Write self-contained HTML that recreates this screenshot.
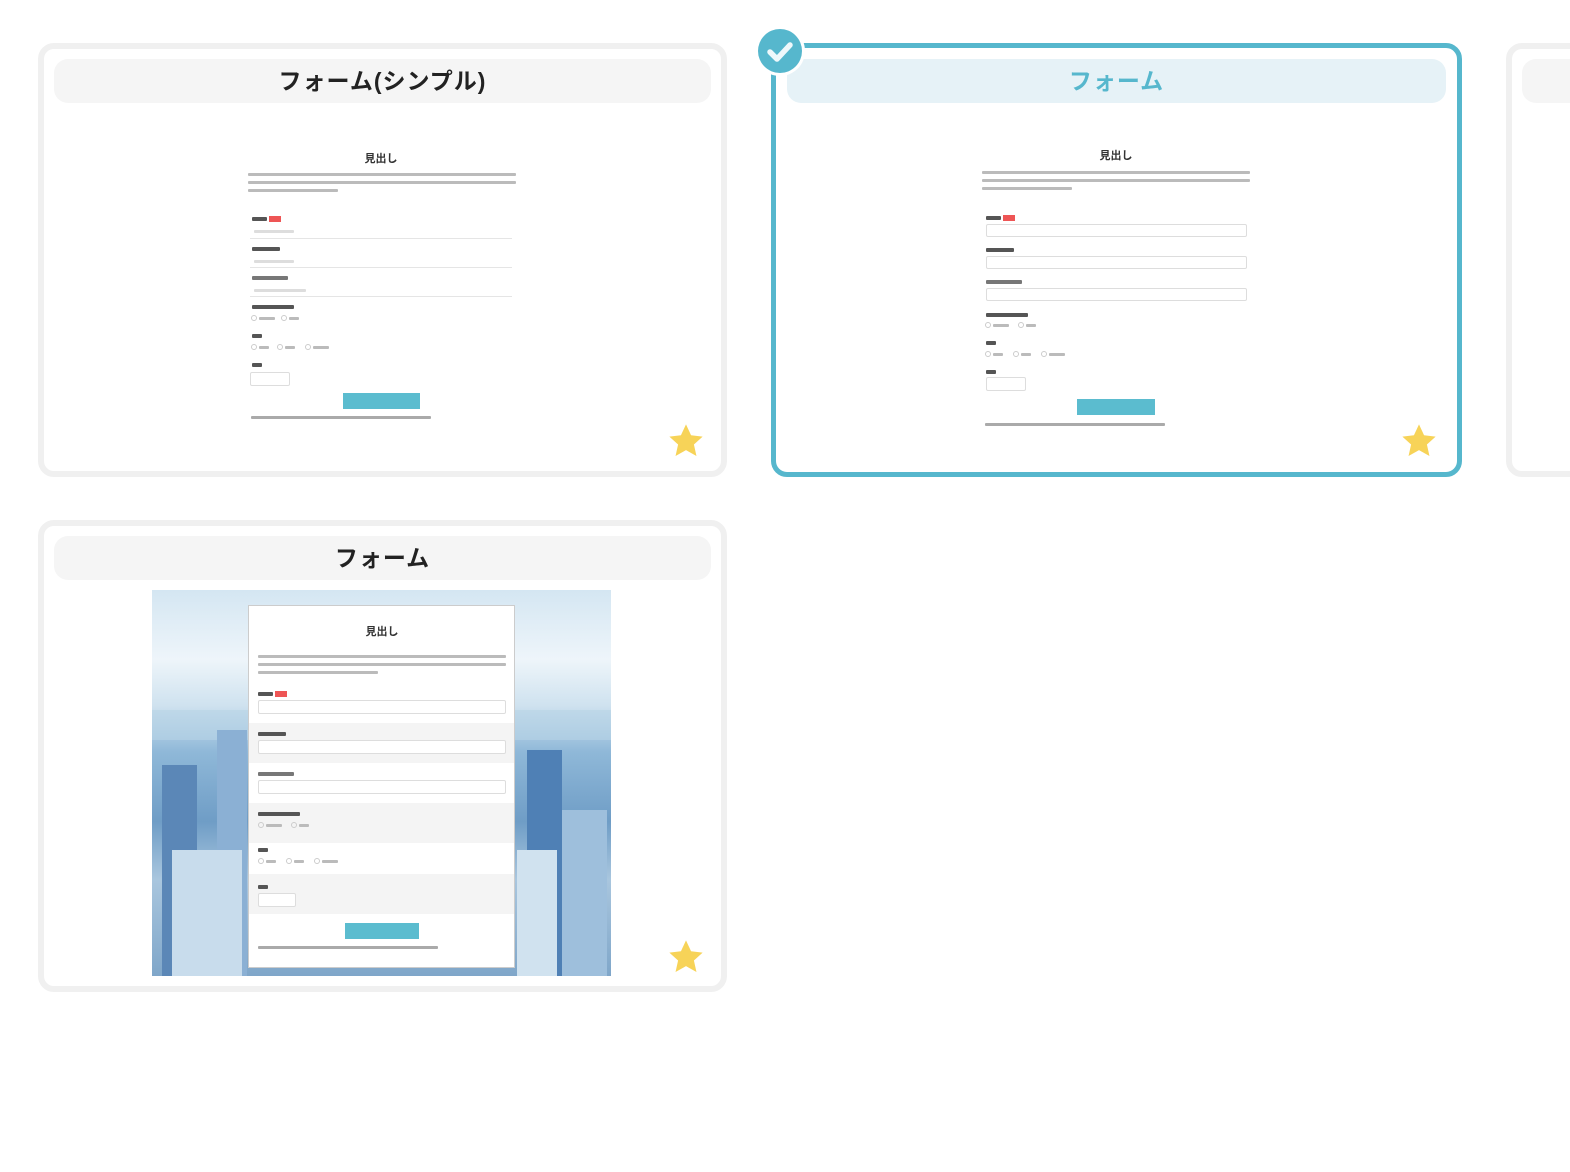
<!DOCTYPE html>
<html><head><meta charset="utf-8"><style>
*{margin:0;padding:0;box-sizing:border-box}
body{width:1570px;height:1172px;background:#fff;position:relative;overflow:hidden;font-family:"Liberation Sans","Noto Sans CJK JP",sans-serif}
.a{position:absolute}
.card{position:absolute;border:6px solid #f0f0f0;border-radius:16px;background:#fff}
.sel{border:5px solid #56b7cd}
.tb{position:absolute;height:44px;border-radius:14px;background:#f5f5f5;font-size:23px;font-weight:bold;color:#222;text-align:center;line-height:44px;letter-spacing:1px}
.b{position:absolute;height:3px;background:#bbb;border-radius:1px}
.l{position:absolute;height:4px;background:#555;border-radius:1px}
.h{position:absolute;font-size:11px;font-weight:bold;color:#333;width:100px;text-align:center;margin-left:-50px}
.rd{position:absolute;width:6px;height:6px;border:1px solid #ccc;border-radius:50%}
.inp{position:absolute;border:1px solid #ddd;border-radius:2px;background:#fff}
.btn{position:absolute;background:#5bbccf}
.star{position:absolute;width:38px;height:38px}
</style></head><body>

<!-- card 1 -->
<div class="card" style="left:38px;top:43px;width:689px;height:434px"></div>
<div class="tb" style="left:54px;top:59px;width:657px">フォーム(シンプル)</div>
<div class="a" style="left:248px;top:140px;width:270px;height:285px">
 <div class="h" style="left:133px;top:10px">見出し</div>
 <div class="b" style="left:0;top:33px;width:268px"></div>
 <div class="b" style="left:0;top:41px;width:268px"></div>
 <div class="b" style="left:0;top:49px;width:90px"></div>
 <div class="l" style="left:4px;top:77px;width:15px"></div><div class="a" style="left:21px;top:76px;width:12px;height:6px;background:#e55"></div>
 <div class="b" style="left:6px;top:90px;width:40px;background:#ddd"></div>
 <div class="a" style="left:2px;top:98px;width:262px;height:1px;background:#e5e5e5"></div>
 <div class="l" style="left:4px;top:107px;width:28px"></div>
 <div class="b" style="left:6px;top:120px;width:40px;background:#ddd"></div>
 <div class="a" style="left:2px;top:127px;width:262px;height:1px;background:#e5e5e5"></div>
 <div class="l" style="left:4px;top:136px;width:36px;background:#777"></div>
 <div class="b" style="left:6px;top:149px;width:52px;background:#ddd"></div>
 <div class="a" style="left:2px;top:156px;width:262px;height:1px;background:#e5e5e5"></div>
 <div class="l" style="left:4px;top:165px;width:42px"></div>
 <div class="rd" style="left:3px;top:175px"></div><div class="b" style="left:11px;top:177px;width:16px"></div>
 <div class="rd" style="left:33px;top:175px"></div><div class="b" style="left:41px;top:177px;width:10px"></div>
 <div class="l" style="left:4px;top:194px;width:10px"></div>
 <div class="rd" style="left:3px;top:204px"></div><div class="b" style="left:11px;top:206px;width:10px"></div>
 <div class="rd" style="left:29px;top:204px"></div><div class="b" style="left:37px;top:206px;width:10px"></div>
 <div class="rd" style="left:57px;top:204px"></div><div class="b" style="left:65px;top:206px;width:16px"></div>
 <div class="l" style="left:4px;top:223px;width:10px"></div>
 <div class="inp" style="left:2px;top:232px;width:40px;height:14px"></div>
 <div class="btn" style="left:95px;top:253px;width:77px;height:16px"></div>
 <div class="b" style="left:3px;top:276px;width:180px;background:#aaa"></div>
</div>
<svg class="star" style="left:667px;top:422px" viewBox="0 0 24 24"><path d="M12 1.5l3.2 6.9 7.3.8-5.5 5 1.6 7.3L12 17.8l-6.6 3.7 1.6-7.3-5.5-5 7.3-.8z" fill="#f7d358"/></svg>

<!-- card 2 -->
<div class="card sel" style="left:771px;top:43px;width:691px;height:434px"></div>
<div class="tb" style="left:787px;top:59px;width:659px;background:#e6f2f7;color:#56b7cd">フォーム</div>
<div class="a" style="left:982px;top:137px;width:270px;height:290px">
 <div class="h" style="left:134px;top:10px">見出し</div>
 <div class="b" style="left:0;top:34px;width:268px"></div>
 <div class="b" style="left:0;top:42px;width:268px"></div>
 <div class="b" style="left:0;top:50px;width:90px"></div>
 <div class="l" style="left:4px;top:79px;width:15px"></div><div class="a" style="left:21px;top:78px;width:12px;height:6px;background:#e55"></div>
 <div class="inp" style="left:4px;top:87px;width:261px;height:13px"></div>
 <div class="l" style="left:4px;top:111px;width:28px"></div>
 <div class="inp" style="left:4px;top:119px;width:261px;height:13px"></div>
 <div class="l" style="left:4px;top:143px;width:36px;background:#777"></div>
 <div class="inp" style="left:4px;top:151px;width:261px;height:13px"></div>
 <div class="l" style="left:4px;top:176px;width:42px"></div>
 <div class="rd" style="left:3px;top:185px"></div><div class="b" style="left:11px;top:187px;width:16px"></div>
 <div class="rd" style="left:36px;top:185px"></div><div class="b" style="left:44px;top:187px;width:10px"></div>
 <div class="l" style="left:4px;top:204px;width:10px"></div>
 <div class="rd" style="left:3px;top:214px"></div><div class="b" style="left:11px;top:216px;width:10px"></div>
 <div class="rd" style="left:31px;top:214px"></div><div class="b" style="left:39px;top:216px;width:10px"></div>
 <div class="rd" style="left:59px;top:214px"></div><div class="b" style="left:67px;top:216px;width:16px"></div>
 <div class="l" style="left:4px;top:233px;width:10px"></div>
 <div class="inp" style="left:4px;top:240px;width:40px;height:14px"></div>
 <div class="btn" style="left:95px;top:262px;width:78px;height:16px"></div>
 <div class="b" style="left:3px;top:286px;width:180px;background:#aaa"></div>
</div>
<svg class="star" style="left:1400px;top:422px" viewBox="0 0 24 24"><path d="M12 1.5l3.2 6.9 7.3.8-5.5 5 1.6 7.3L12 17.8l-6.6 3.7 1.6-7.3-5.5-5 7.3-.8z" fill="#f7d358"/></svg>
<div class="a" style="left:755px;top:26px;width:50px;height:50px;border-radius:50%;background:#fff"></div>
<div class="a" style="left:758px;top:29px;width:44px;height:44px;border-radius:50%;background:#56b7cd"></div>
<svg class="a" style="left:758px;top:29px" width="44" height="44" viewBox="0 0 44 44"><path d="M12 23l7 7 13-14" fill="none" stroke="#eef8fb" stroke-width="5.5" stroke-linecap="round" stroke-linejoin="round"/></svg>

<!-- card 3 -->
<div class="card" style="left:1506px;top:43px;width:200px;height:434px"></div>
<div class="tb" style="left:1522px;top:59px;width:200px"></div>

<!-- card 4 -->
<div class="card" style="left:38px;top:520px;width:689px;height:472px"></div>
<div class="tb" style="left:54px;top:536px;width:657px">フォーム</div>
<div class="a" style="left:152px;top:590px;width:459px;height:386px;overflow:hidden;background:linear-gradient(180deg,#d4e6f2 0%,#eef5fa 18%,#cfe2ef 30%,#8fb8d8 42%,#6f9dc6 60%,#a9c6de 75%,#7fa6c9 100%)">
 <div class="a" style="left:0;top:120px;width:459px;height:30px;background:#b8d3e6;opacity:.6"></div>
 <div class="a" style="left:10px;top:175px;width:35px;height:211px;background:#5b87b7"></div>
 <div class="a" style="left:65px;top:140px;width:30px;height:246px;background:#8bb0d4"></div>
 <div class="a" style="left:20px;top:260px;width:70px;height:126px;background:#c8dcec"></div>
 <div class="a" style="left:375px;top:160px;width:35px;height:226px;background:#4f80b5"></div>
 <div class="a" style="left:410px;top:220px;width:45px;height:166px;background:#9ebfdc"></div>
 <div class="a" style="left:365px;top:260px;width:40px;height:126px;background:#d0e2ef"></div>
</div>
<div class="a" style="left:248px;top:605px;width:267px;height:363px;background:#fff;border:1px solid #ccc">
 <div class="a" style="left:0;top:117px;width:265px;height:40px;background:#f4f4f4"></div>
 <div class="a" style="left:0;top:197px;width:265px;height:40px;background:#f4f4f4"></div>
 <div class="a" style="left:0;top:268px;width:265px;height:40px;background:#f4f4f4"></div>
 <div class="h" style="left:133px;top:17px">見出し</div>
 <div class="b" style="left:9px;top:49px;width:248px"></div>
 <div class="b" style="left:9px;top:57px;width:248px"></div>
 <div class="b" style="left:9px;top:65px;width:120px"></div>
 <div class="l" style="left:9px;top:86px;width:15px"></div><div class="a" style="left:26px;top:85px;width:12px;height:6px;background:#e55"></div>
 <div class="inp" style="left:9px;top:94px;width:248px;height:14px"></div>
 <div class="l" style="left:9px;top:126px;width:28px"></div>
 <div class="inp" style="left:9px;top:134px;width:248px;height:14px"></div>
 <div class="l" style="left:9px;top:166px;width:36px;background:#777"></div>
 <div class="inp" style="left:9px;top:174px;width:248px;height:14px"></div>
 <div class="l" style="left:9px;top:206px;width:42px"></div>
 <div class="rd" style="left:9px;top:216px"></div><div class="b" style="left:17px;top:218px;width:16px"></div>
 <div class="rd" style="left:42px;top:216px"></div><div class="b" style="left:50px;top:218px;width:10px"></div>
 <div class="l" style="left:9px;top:242px;width:10px"></div>
 <div class="rd" style="left:9px;top:252px"></div><div class="b" style="left:17px;top:254px;width:10px"></div>
 <div class="rd" style="left:37px;top:252px"></div><div class="b" style="left:45px;top:254px;width:10px"></div>
 <div class="rd" style="left:65px;top:252px"></div><div class="b" style="left:73px;top:254px;width:16px"></div>
 <div class="l" style="left:9px;top:279px;width:10px"></div>
 <div class="inp" style="left:9px;top:287px;width:38px;height:14px"></div>
 <div class="btn" style="left:96px;top:317px;width:74px;height:16px"></div>
 <div class="b" style="left:9px;top:340px;width:180px;background:#aaa"></div>
</div>
<svg class="star" style="left:667px;top:938px" viewBox="0 0 24 24"><path d="M12 1.5l3.2 6.9 7.3.8-5.5 5 1.6 7.3L12 17.8l-6.6 3.7 1.6-7.3-5.5-5 7.3-.8z" fill="#f7d358"/></svg>
</body></html>
